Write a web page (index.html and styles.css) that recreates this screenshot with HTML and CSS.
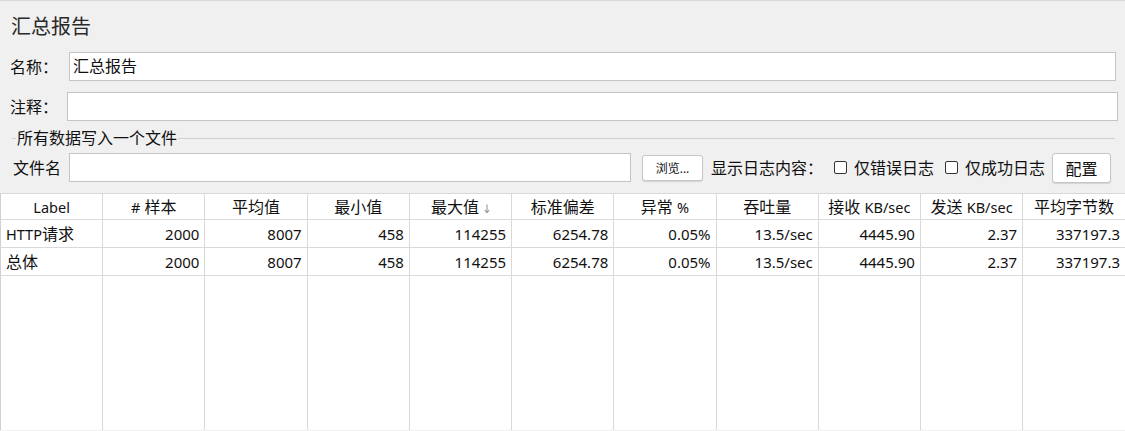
FILE: index.html
```html
<!DOCTYPE html>
<html lang="zh">
<head>
<meta charset="utf-8">
<title>汇总报告</title>
<link rel="stylesheet" href="styles.css">
</head>
<body>
<div class="panel">
  <div class="title">汇总报告</div>
  <div class="row row-name">
    <span class="lbl lbl-name">名称：</span>
    <div class="input input-name">汇总报告</div>
  </div>
  <div class="row row-comment">
    <span class="lbl lbl-comment">注释：</span>
    <div class="input input-comment"></div>
  </div>
  <div class="group">
    <div class="legend-line"><span class="legend">所有数据写入一个文件</span></div>
    <div class="row row-file">
      <span class="lbl lbl-file">文件名</span>
      <div class="input input-file"></div>
      <button class="btn btn-browse">浏览...</button>
      <span class="txt show-lbl">显示日志内容：</span>
      <span class="check check-err"></span><span class="txt check-lbl">仅错误日志</span>
      <span class="check check-ok"></span><span class="txt check-lbl">仅成功日志</span>
      <button class="btn btn-config">配置</button>
    </div>
  </div>
</div>
<table class="grid">
  <thead>
    <tr>
      <th><span class="en">Label</span></th>
      <th><span class="en">#</span> 样本</th>
      <th>平均值</th>
      <th>最小值</th>
      <th>最大值 <svg class="sort" width="6" height="10" viewBox="0 0 6 10"><path d="M3 0.5V8.5M0.8 6.2L3 8.6L5.2 6.2" fill="none" stroke="#9a9a9a" stroke-width="1.1"/></svg></th>
      <th>标准偏差</th>
      <th>异常 <span class="en">%</span></th>
      <th>吞吐量</th>
      <th>接收 <span class="en">KB/sec</span></th>
      <th>发送 <span class="en">KB/sec</span></th>
      <th>平均字节数</th>
    </tr>
  </thead>
  <tbody>
    <tr>
      <td class="l"><span class="en">HTTP</span>请求</td><td>2000</td><td>8007</td><td>458</td><td>114255</td><td>6254.78</td><td>0.05%</td><td>13.5/sec</td><td>4445.90</td><td>2.37</td><td>337197.3</td>
    </tr>
    <tr>
      <td class="l">总体</td><td>2000</td><td>8007</td><td>458</td><td>114255</td><td>6254.78</td><td>0.05%</td><td>13.5/sec</td><td>4445.90</td><td>2.37</td><td>337197.3</td>
    </tr>
    <tr class="filler">
      <td></td><td></td><td></td><td></td><td></td><td></td><td></td><td></td><td></td><td></td><td></td>
    </tr>
  </tbody>
</table>
</body>
</html>
```
FILE: styles.css
```css
html, body {
  margin: 0;
  padding: 0;
}
body {
  width: 1125px;
  height: 431px;
  overflow: hidden;
  background: #f0f0f0;
  font-family: "Noto Sans", "Noto Sans CJK SC", sans-serif;
  font-size: 16px;
  color: #111;
}
.en {
  font-size: 14.5px;
}
.panel {
  border-top: 1px solid #d9d9d9;
  height: 193px;
  box-sizing: border-box;
}
.title {
  font-size: 20px;
  line-height: 24px;
  padding: 14px 0 0 11px;
  height: 38px;
  box-sizing: border-box;
  color: #2a2a2a;
}
.row {
  display: flex;
  align-items: center;
}
.row-name {
  height: 29px;
  margin-top: 13px;
  padding-left: 10px;
}
.row-comment {
  height: 29px;
  margin-top: 11px;
  padding-left: 10px;
}
.lbl {
  flex: none;
  line-height: 20px;
}
.lbl-name { width: 59px; }
.lbl-comment { width: 57px; }
.input {
  height: 29px;
  box-sizing: border-box;
  border: 1px solid #c4c4c4;
  background: #fff;
  line-height: 26px;
  padding-left: 3px;
}
.input-name { width: 1047px; }
.input-comment { width: 1051px; }
.group {
  margin-top: 9px;
}
.legend-line {
  display: flex;
  align-items: center;
  margin: 0 10px 0 12px;
  height: 16px;
}
.legend-line::before {
  content: "";
  width: 4px;
  border-top: 1px solid #d0d0d0;
  flex: none;
}
.legend-line::after {
  content: "";
  flex: 1;
  border-top: 1px solid #d0d0d0;
}
.legend {
  padding: 0 1px;
  line-height: 16px;
}
.row-file {
  height: 29px;
  margin-top: 7px;
  padding-left: 13px;
}
.lbl-file { width: 56px; }
.input-file { width: 562px; }
.btn {
  font-family: "Noto Sans", "Noto Sans CJK SC", sans-serif;
  background: #fff;
  border: 1px solid #c6c6c6;
  border-radius: 3px;
  box-shadow: 0 1px 1px rgba(0,0,0,0.12);
  color: #111;
  padding: 0;
  flex: none;
}
.btn-browse {
  width: 61px;
  height: 26px;
  font-size: 12px;
  margin-left: 11px;
}
.txt {
  line-height: 20px;
  flex: none;
  white-space: nowrap;
}
.show-lbl {
  margin-left: 8px;
}
.check {
  width: 11px;
  height: 11px;
  border: 1px solid #333;
  border-radius: 2px;
  background: #fff;
  flex: none;
  margin-right: 7px;
}
.check-err { margin-left: 11px; }
.check-ok { margin-left: 11px; }
.btn-config {
  width: 59px;
  height: 30px;
  font-size: 16px;
  margin-left: 7px;
}
.grid {
  width: 1125px;
  table-layout: fixed;
  border-collapse: collapse;
  background: #fff;
  border-top: 1px solid #d6d6d6;
}
.grid th, .grid td {
  border: 1px solid #d9d9d9;
  padding: 0 5px;
  white-space: nowrap;
  overflow: hidden;
  font-weight: normal;
  color: #111;
}
.grid th {
  height: 25px;
  text-align: center;
  line-height: 20px;
  font-size: 16px;
}
.grid td {
  height: 27px;
  text-align: right;
  font-size: 15px;
  line-height: 20px;
}
.grid td.l {
  text-align: left;
  font-size: 16px;
}
.grid tr.filler td {
  height: 154px;
  border-bottom: none;
}
.grid th:first-child, .grid td:first-child {
  border-left: 1px solid #d0d0d0;
}
.grid th:last-child, .grid td:last-child {
  border-right: none;
}
.sort {
  vertical-align: -1px;
  margin-left: 1px;
}
```
